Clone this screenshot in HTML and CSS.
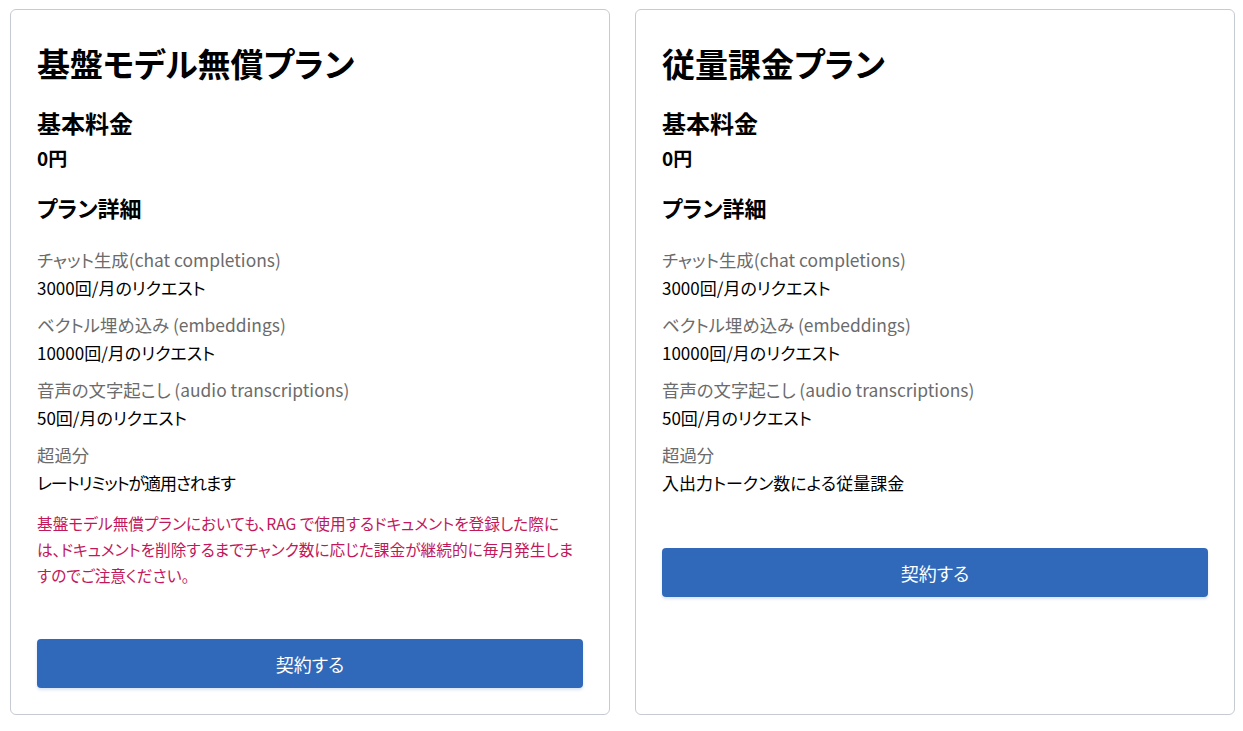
FILE: index.html
```html
<!DOCTYPE html>
<html lang="ja">
<head>
<meta charset="utf-8">
<title>プラン</title>
<link rel="stylesheet" href="styles.css">
</head>
<body>
<div class="plans">
  <section class="card">
    <h2 class="title">基盤モデル無償プラン</h2>
    <h3 class="heading">基本料金</h3>
    <p class="price">0円</p>
    <h3 class="heading detail-heading">プラン詳細</h3>
    <dl class="details">
      <div class="item"><dt>チャット生成(chat completions)</dt><dd>3000回/月のリクエスト</dd></div>
      <div class="item"><dt>ベクトル埋め込み (embeddings)</dt><dd>10000回/月のリクエスト</dd></div>
      <div class="item"><dt>音声の文字起こし (audio transcriptions)</dt><dd>50回/月のリクエスト</dd></div>
      <div class="item"><dt>超過分</dt><dd class="narrow">レートリミットが適用されます</dd></div>
    </dl>
    <p class="notice">基盤モデル無償プランにおいても、RAG で使用するドキュメントを登録した際に<br>は、ドキュメントを削除するまでチャンク数に応じた課金が継続的に毎月発生しま<br>すのでご注意ください。</p>
    <button class="btn" type="button">契約する</button>
  </section>
  <section class="card">
    <h2 class="title">従量課金プラン</h2>
    <h3 class="heading">基本料金</h3>
    <p class="price">0円</p>
    <h3 class="heading detail-heading">プラン詳細</h3>
    <dl class="details">
      <div class="item"><dt>チャット生成(chat completions)</dt><dd>3000回/月のリクエスト</dd></div>
      <div class="item"><dt>ベクトル埋め込み (embeddings)</dt><dd>10000回/月のリクエスト</dd></div>
      <div class="item"><dt>音声の文字起こし (audio transcriptions)</dt><dd>50回/月のリクエスト</dd></div>
      <div class="item"><dt>超過分</dt><dd>入出力トークン数による従量課金</dd></div>
    </dl>
    <button class="btn btn-right" type="button">契約する</button>
  </section>
</div>
</body>
</html>
```

FILE: styles.css
```css
* { box-sizing: border-box; }

html, body {
  margin: 0;
  background: #ffffff;
}

body {
  font-family: "Noto Sans CJK JP", "Noto Sans", sans-serif;
  font-feature-settings: "palt";
  color: #000;
}

.plans {
  display: grid;
  grid-template-columns: 600px 600px;
  column-gap: 25px;
  padding: 9px 8px 16px 10px;
  align-items: stretch;
}

.card {
  border: 1px solid #c6cad2;
  border-radius: 6px;
  padding: 32px 26px 26px 26px;
  display: flex;
  flex-direction: column;
}

.title {
  margin: 0 0 23px 0;
  font-size: 33px;
  line-height: 42px;
  font-weight: 700;
}

.heading {
  margin: 0;
  font-size: 24px;
  line-height: 32px;
  font-weight: 700;
}

.price {
  margin: 1px 0 0 0;
  font-size: 19px;
  line-height: 36px;
  font-weight: 700;
}

.detail-heading {
  margin-top: 15px;
  font-size: 22px;
}

.details {
  margin: 23px 0 0 0;
  display: flex;
  flex-direction: column;
  gap: 9px;
}

.item dt {
  font-size: 17.4px;
  line-height: 28px;
  color: #6b6b6b;
}

.item dd {
  margin: 0;
  font-size: 17px;
  line-height: 28px;
  color: #000;
}

.item dd.narrow {
  letter-spacing: -1.1px;
}

.notice {
  margin: 14px 0 0 0;
  font-size: 15.7px;
  line-height: 26px;
  color: #c2185b;
  white-space: nowrap;
}

.btn {
  margin-top: 50px;
  height: 49px;
  width: 100%;
  border: none;
  border-radius: 4px;
  background: #3069b9;
  color: #fff;
  font-family: inherit;
  font-feature-settings: "palt";
  font-size: 18px;
  box-shadow: 0 2px 3px rgba(48, 105, 185, 0.18);
  cursor: pointer;
}

.btn-right {
  margin-top: 51px;
}
```
